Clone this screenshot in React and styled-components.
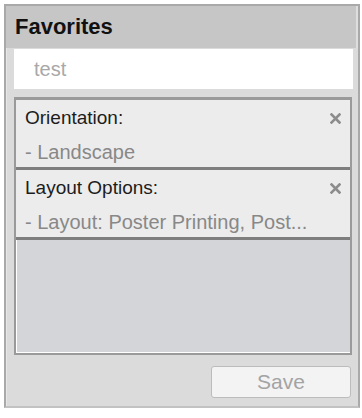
import styled, { createGlobalStyle } from 'styled-components';

const GlobalStyle = createGlobalStyle`
  html, body {
    margin: 0;
    padding: 0;
    background: #ffffff;
  }
  body {
    font-family: "Liberation Sans", Arial, sans-serif;
  }
`;

const favorites = [
  { title: 'Orientation:', value: '- Landscape' },
  { title: 'Layout Options:', value: '- Layout: Poster Printing, Post...' },
];

const CloseIcon = () => (
  <svg width="11" height="11" viewBox="0 0 11 11">
    <path d="M1.5 1.5 L9.5 9.5 M9.5 1.5 L1.5 9.5" stroke="#8c8c8c" strokeWidth="2.6" strokeLinecap="square" />
  </svg>
);

export default () => {
  const renderItems = () => {
    return favorites.map(({ title, value }, index) => (
      <Item key={index}>
        <TitleRow>
          <Title>{title}</Title>
          <Remove>
            <CloseIcon />
          </Remove>
        </TitleRow>
        <Value>{value}</Value>
      </Item>
    ));
  };

  return (
    <>
      <GlobalStyle />
      <Frame>
        <Header>Favorites</Header>
        <Body>
          <NameField>test</NameField>
          <List>{renderItems()}</List>
          <Footer>
            <SaveButton>Save</SaveButton>
          </Footer>
        </Body>
      </Frame>
    </>
  );
};

const Frame = styled.div`
  margin: 4px 0 0 4px;
  width: 356px;
  height: 404px;
  box-sizing: border-box;
  border: 2px solid #a9a9a9;
  border-bottom-color: #c2c2c2;
  background: #dbdbdb;
  display: flex;
  flex-direction: column;
`;

const Header = styled.div`
  height: 42px;
  background: #c6c6c6;
  padding-left: 9px;
  display: flex;
  align-items: center;
  font-size: 22px;
  font-weight: bold;
  color: #111;
  box-shadow: inset -2px 0 0 #dedede;
`;

const Body = styled.div`
  flex: 1;
  display: flex;
  flex-direction: column;
  padding: 1px 5px 0 8px;
  box-shadow: inset 1px 0 0 #e6e6e6;
`;

const NameField = styled.div`
  height: 40px;
  background: #ffffff;
  padding-left: 20px;
  display: flex;
  align-items: center;
  font-size: 20px;
  color: #a8a8a8;
`;

const List = styled.div`
  margin: 8px 1px 0 0;
  height: 258px;
  box-sizing: border-box;
  border: 2px solid #9a9a9a;
  border-top-width: 3px;
  background: #d4d5d8;
  box-shadow: inset 1px -1px 0 #ffffff;
`;

const Item = styled.div`
  height: 70px;
  box-sizing: border-box;
  padding: 0 9px 0 9px;
  background: #ececec;
  border-bottom: 3px solid #7e7e7e;
`;

const TitleRow = styled.div`
  height: 36px;
  display: flex;
  align-items: center;
  justify-content: space-between;
`;

const Title = styled.span`
  font-size: 19px;
  color: #1c1c1c;
`;

const Remove = styled.span`
  display: flex;
  align-items: center;
`;

const Value = styled.div`
  height: 33px;
  display: flex;
  align-items: center;
  font-size: 20px;
  color: #888888;
  white-space: nowrap;
`;

const Footer = styled.div`
  display: flex;
  justify-content: flex-end;
  padding: 11px 2px 0 0;
`;

const SaveButton = styled.div`
  width: 140px;
  height: 32px;
  box-sizing: border-box;
  border: 1px solid #bcbcbc;
  border-radius: 3px;
  background: #f3f3f3;
  display: flex;
  align-items: center;
  justify-content: center;
  font-size: 21px;
  color: #a3a3a3;
`;
